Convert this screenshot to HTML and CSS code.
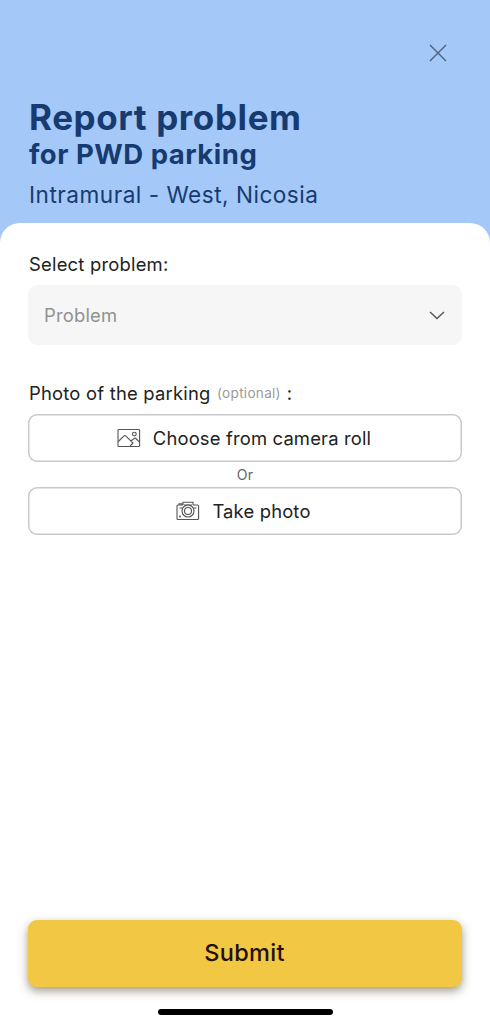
FILE: index.html
```html
<!DOCTYPE html>
<html lang="en">
<head>
<meta charset="utf-8">
<title>Report problem</title>
<link rel="stylesheet" href="styles.css">
</head>
<body>
<div class="screen">
  <header class="header">
    <button class="close" aria-label="Close">
      <svg width="18" height="18" viewBox="0 0 18 18"><path d="M1 1l16 16M17 1L1 17"/></svg>
    </button>
    <h1 class="title">Report problem</h1>
    <h2 class="subtitle">for PWD parking</h2>
    <p class="location">Intramural - West, Nicosia</p>
  </header>
  <main class="sheet">
    <div class="label">Select problem:</div>
    <div class="select">
      <span class="placeholder">Problem</span>
      <svg class="chevron" width="16" height="9" viewBox="0 0 16 9"><path d="M1 1l7 6.500L15 1"/></svg>
    </div>
    <div class="label photo-label">Photo of the parking <span class="optional">(optional)</span><span class="colon">:</span></div>
    <button class="option choose">
      <svg class="icon" width="24" height="20" viewBox="0 0 24 20"><rect x="1" y="1.500" width="21.600" height="17" rx=".8"/><path d="M1.300 13.500L7.300 7.700Q8 7.200 8.700 7.800L16 15L15 16.500M16 15L13.800 13L17.500 10.300Q18.200 9.900 18.800 10.500L22.500 14M13 18.200L16 15"/><circle cx="17.300" cy="6.100" r="1.900"/></svg>
      <span>Choose from camera roll</span>
    </button>
    <div class="or">Or</div>
    <button class="option take">
      <svg class="icon" width="24" height="20" viewBox="0 0 24 20"><path d="M7 4V1.200h10V4M3 4V2.800h2.800V4M17 4h4.600q1 0 1 1v12.500q0 1-1 1H2q-1 0-1-1V5q0-1 1-1h5M8 4h8M3.500 7h3M17.500 7h3"/><circle cx="12" cy="10" r="6"/><circle cx="12" cy="10" r="3.500"/><circle class="dot" cx="4" cy="15.500" r="1"/></svg>
      <span>Take photo</span>
    </button>
    <button class="submit">Submit</button>
    <div class="home-indicator"></div>
  </main>
</div>
</body>
</html>
```
FILE: styles.css
```css
* { box-sizing: border-box; }
body { margin: 0; font-family: Inter, "Liberation Sans", sans-serif; }
button { font-family: inherit; margin: 0; }
svg { display: block; fill: none; flex: none; }
.screen { width: 490px; height: 1024px; display: flex; flex-direction: column; background: #a4c8f8; overflow: hidden; }
.header { height: 223px; flex: none; padding: 44px 29px 0; display: flex; flex-direction: column; color: #173b70; }
.close { align-self: flex-end; margin-right: 14px; padding: 0; border: 0; background: none; height: 18px; }
.close svg { stroke: #50607a; stroke-width: 1.4; }
.title { margin: 34px 0 0; font-size: 35px; line-height: 42px; font-weight: 700; letter-spacing: 0.6px; white-space: nowrap; }
.subtitle { margin: 0; font-size: 27.5px; line-height: 32px; font-weight: 700; letter-spacing: 0.5px; white-space: nowrap; }
.location { margin: 9px 0 0; font-size: 22.6px; line-height: 32px; letter-spacing: 0.5px; white-space: nowrap; }
.sheet { flex: 1; display: flex; flex-direction: column; padding: 29px 28px 9px; background: #fff; border-radius: 20px 20px 0 0; }
.label { padding-left: 1px; font-size: 18.4px; line-height: 24px; letter-spacing: 0.22px; color: #222; white-space: nowrap; }
.select { height: 60px; margin-top: 9px; padding: 0 17px 0 16px; border-radius: 9px; background: #f6f6f6; display: flex; align-items: center; justify-content: space-between; }
.placeholder { font-size: 18.4px; letter-spacing: 0.2px; color: #929292; }
.chevron { stroke: #555; stroke-width: 1.4; }
.photo-label { margin-top: 36px; display: flex; align-items: center; }
.optional { margin-left: 6.5px; font-size: 13.6px; letter-spacing: 0.27px; color: #9a9a9a; }
.colon { margin-left: 6px; }
.option { height: 48px; border: 0; box-shadow: inset 0 0 0 1.5px #c9c9c9; border-radius: 9px; background: #fff; display: flex; align-items: center; justify-content: center; gap: 12px; padding: 0; font-size: 18.4px; letter-spacing: 0.17px; color: #222; white-space: nowrap; }
.choose { padding-right: 2px; }
.take { padding-right: 3px; }
.photo-label + .option { margin-top: 9px; }
.icon { stroke: #555; stroke-width: 1.1; }
.dot { fill: #555; stroke: none; }
.or { height: 25px; line-height: 25px; text-align: center; font-size: 14px; letter-spacing: 0.3px; color: #666; }
.submit { height: 67px; margin-top: auto; padding: 0 1px 2px 0; border: 0; border-radius: 9px; background: #f2c744; color: #1f1108; font-size: 23.5px; font-weight: 500; letter-spacing: 0.3px; box-shadow: 0 4px 10px rgba(70, 55, 15, 0.5); }
.home-indicator { width: 175px; height: 6px; margin: 22px auto 0; border-radius: 3px; background: #000; }
```
